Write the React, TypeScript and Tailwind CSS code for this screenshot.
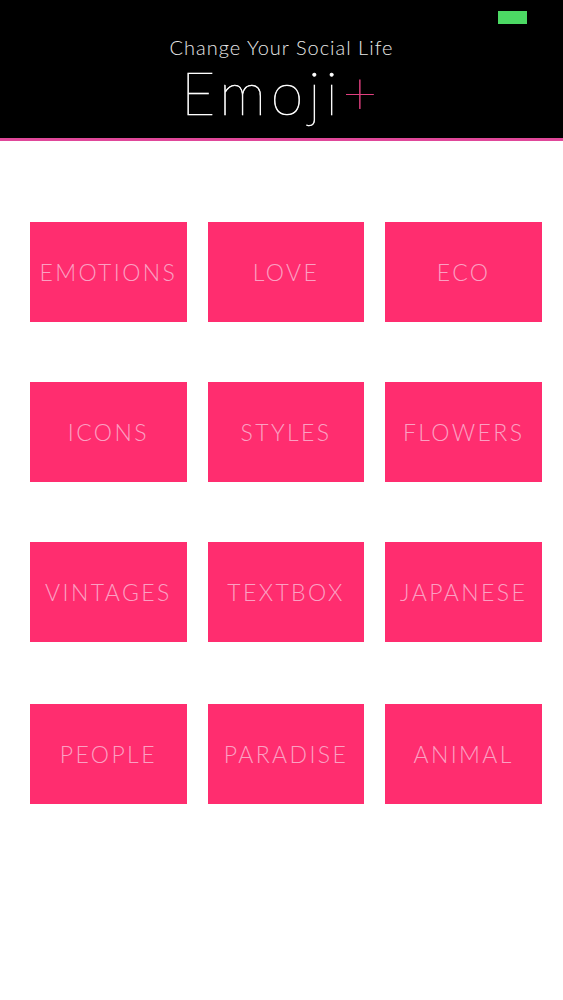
import React from "react";

const items = [
  "EMOTIONS", "LOVE", "ECO",
  "ICONS", "STYLES", "FLOWERS",
  "VINTAGES", "TEXTBOX", "JAPANESE",
  "PEOPLE", "PARADISE", "ANIMAL",
];

export default function App() {
  return (
    <div className="w-[563px] h-[1000px] bg-white overflow-hidden" style={{ fontFamily: "Lato, 'Open Sans', sans-serif" }}>
      <div className="relative h-[138px] bg-black flex flex-col items-center">
        <div className="absolute left-[498px] top-[11px] w-[29px] h-[13px] bg-[#4cd964]" />
        <div className="mt-[35px] text-[20px] leading-[24px] font-light text-[#e8e8e8] tracking-[1px]">Change Your Social Life</div>
        <div className="mt-[2px] text-[59px] leading-[64px] font-thin text-white tracking-[5px] [-webkit-text-stroke:0.6px_white]">
          Emoji<span className="text-[#e0407f] [-webkit-text-stroke:0.6px_#e0407f]">+</span>
        </div>
      </div>
      <div className="h-[3px] bg-[#e0489a]" />
      <div className="ml-[30px] w-[512px] pt-[81px] grid grid-cols-3 gap-x-[21px] gap-y-[60px]">
        {items.map((t, i) => (
          <div key={t} className={`h-[100px] bg-[#ff2d6f] flex items-center justify-center text-[23px] font-light text-[#fba0c2] tracking-[2.4px] ${i >= 9 ? "mt-[2px]" : ""}`}>
            {t}
          </div>
        ))}
      </div>
    </div>
  );
}
